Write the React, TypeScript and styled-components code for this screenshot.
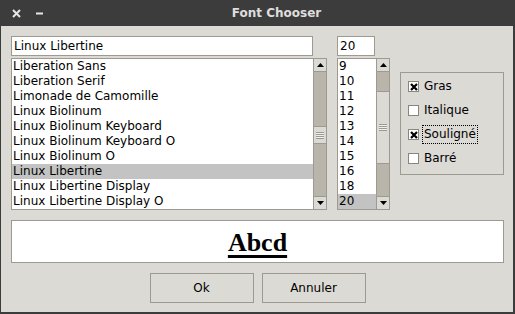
import styled, { createGlobalStyle } from "styled-components";

const GlobalStyle = createGlobalStyle`
  html, body { margin: 0; padding: 0; background: #dcdad5; }
  body { font-family: "DejaVu Sans", sans-serif; font-size: 12px; color: #000; }
`;

const fonts = [
  "Liberation Sans",
  "Liberation Serif",
  "Limonade de Camomille",
  "Linux Biolinum",
  "Linux Biolinum Keyboard",
  "Linux Biolinum Keyboard O",
  "Linux Biolinum O",
  "Linux Libertine",
  "Linux Libertine Display",
  "Linux Libertine Display O",
];

const sizes = ["9", "10", "11", "12", "13", "14", "15", "16", "18", "20"];

const styles = [
  { label: "Gras", checked: true, focus: false },
  { label: "Italique", checked: false, focus: false },
  { label: "Souligné", checked: true, focus: true },
  { label: "Barré", checked: false, focus: false },
];

const Window = styled.div`
  width: 515px;
  height: 314px;
  display: flex;
  flex-direction: column;
  box-sizing: border-box;
`;

const TitleBar = styled.div`
  height: 26px;
  background: #3c3c3c;
  display: flex;
  align-items: center;
  padding-left: 12px;
  gap: 14px;
  color: #dedede;
`;

const TitleText = styled.div`
  flex: 1;
  text-align: center;
  font-weight: bold;
  font-size: 12px;
  padding-right: 20px;
`;

const Body = styled.div`
  flex: 1;
  display: flex;
  flex-direction: column;
  padding: 10px 9px 0 10px;
  border-left: 1px solid #3c3c3c;
  border-right: 2px solid #3c3c3c;
  border-bottom: 2px solid #3c3c3c;
  box-sizing: border-box;
`;

const TopRow = styled.div`
  display: flex;
  height: 174px;
  gap: 10px;
  margin-bottom: 10px;
`;

const Column = styled.div<{ $width: number }>`
  width: ${(p) => p.$width}px;
  display: flex;
  flex-direction: column;
  gap: 2px;
`;

const Entry = styled.div<{ $width: number }>`
  width: ${(p) => p.$width}px;
  height: 20px;
  box-sizing: border-box;
  border: 1px solid #9e9a91;
  background: #fff;
  padding-left: 2px;
  line-height: 18px;
  font-size: 12px;
`;

const ListWrap = styled.div`
  display: flex;
  height: 152px;
`;

const List = styled.div`
  flex: 1;
  box-sizing: border-box;
  border: 1px solid #9e9a91;
  border-right: none;
  background: #fff;
  overflow: hidden;
`;

const Item = styled.div<{ $selected?: boolean }>`
  height: 15px;
  line-height: 15px;
  padding-left: 1px;
  white-space: nowrap;
  background: ${(p) => (p.$selected ? "#c3c3c3" : "transparent")};
`;

const ScrollBar = styled.div`
  width: 14px;
  display: flex;
  flex-direction: column;
  box-sizing: border-box;
  border: 1px solid #9e9a91;
  background: #bab5ab;
`;

const Arrow = styled.div`
  height: 13px;
  box-sizing: border-box;
  background: #dcdad5;
  border-bottom: 1px solid #9e9a91;
  display: flex;
  align-items: center;
  justify-content: center;
  &:last-child {
    border-bottom: none;
    border-top: 1px solid #9e9a91;
  }
`;

const Trough = styled.div`
  flex: 1;
  display: flex;
  flex-direction: column;
`;

const Thumb = styled.div`
  box-sizing: border-box;
  background: #dcdad5;
  border-top: 1px solid #9e9a91;
  border-bottom: 1px solid #9e9a91;
  display: flex;
  align-items: center;
  justify-content: center;
`;

const Grip = styled.div`
  width: 8px;
  height: 7px;
  background: repeating-linear-gradient(
    to bottom,
    #9e9a91 0,
    #9e9a91 1px,
    #f0efec 1px,
    #f0efec 2px
  );
`;

const CheckFrame = styled.div`
  align-self: center;
  width: 104px;
  height: 103px;
  box-sizing: border-box;
  border: 1px solid #9e9a91;
  padding: 2px 7px;
  display: flex;
  flex-direction: column;
`;

const CheckRow = styled.div`
  height: 24px;
  display: flex;
  align-items: center;
  gap: 3px;
`;

const Box = styled.div`
  width: 11px;
  height: 11px;
  box-sizing: border-box;
  border: 1px solid #8a867e;
  background: #fff;
  display: flex;
  align-items: center;
  justify-content: center;
`;

const Label = styled.span<{ $focus?: boolean }>`
  padding: 1px 1px 2px;
  border: 1px dotted ${(p) => (p.$focus ? "#000" : "transparent")};
  font-size: 12px;
`;

const Preview = styled.div`
  width: 493px;
  height: 43px;
  box-sizing: border-box;
  border: 1px solid #9e9a91;
  background: #fff;
  display: flex;
  align-items: center;
  justify-content: center;
`;

const Sample = styled.span`
  font-family: "Liberation Serif", serif;
  font-weight: bold;
  font-size: 26px;
  text-decoration: underline;
  text-decoration-thickness: 3px;
  text-underline-offset: 4px;
  margin-top: 2px;
`;

const ButtonRow = styled.div`
  width: 493px;
  display: flex;
  justify-content: center;
  gap: 8px;
  margin-top: 10px;
`;

const Button = styled.div`
  width: 104px;
  height: 30px;
  box-sizing: border-box;
  border: 1px solid #9e9a91;
  background: #dcdad5;
  display: flex;
  align-items: center;
  justify-content: center;
  font-size: 12px;
`;

const Tri = ({ down }: { down?: boolean }) => (
  <svg width="7" height="4" viewBox="0 0 7 4">
    <polygon points={down ? "0,0 7,0 3.5,4" : "0,4 7,4 3.5,0"} fill="#000" />
  </svg>
);

const Scroll = ({ top, size }: { top: number; size: number }) => (
  <ScrollBar>
    <Arrow>
      <Tri />
    </Arrow>
    <Trough>
      <Thumb style={{ marginTop: top, height: size }}>
        <Grip />
      </Thumb>
    </Trough>
    <Arrow>
      <Tri down />
    </Arrow>
  </ScrollBar>
);

const Cross = () => (
  <svg width="8" height="8" viewBox="0 0 8 8">
    <path d="M1 1 L7 7 M7 1 L1 7" stroke="#000" strokeWidth="2.2" />
  </svg>
);

export default function App() {
  return (
    <Window>
      <GlobalStyle />
      <TitleBar>
        <svg width="9" height="9" viewBox="0 0 9 9">
          <path d="M1 1 L8 8 M8 1 L1 8" stroke="#e6e6e6" strokeWidth="2" />
        </svg>
        <svg width="9" height="9" viewBox="0 0 9 9">
          <path d="M1 4.5 L8 4.5" stroke="#e6e6e6" strokeWidth="2" />
        </svg>
        <TitleText>Font Chooser</TitleText>
      </TitleBar>
      <Body>
        <TopRow>
          <Column $width={316}>
            <Entry $width={302}>Linux Libertine</Entry>
            <ListWrap>
              <List>
                {fonts.map((f) => (
                  <Item key={f} $selected={f === "Linux Libertine"}>
                    {f}
                  </Item>
                ))}
              </List>
              <Scroll top={54} size={18} />
            </ListWrap>
          </Column>
          <Column $width={53}>
            <Entry $width={38}>20</Entry>
            <ListWrap>
              <List>
                {sizes.map((s) => (
                  <Item key={s} $selected={s === "20"}>
                    {s}
                  </Item>
                ))}
              </List>
              <Scroll top={19} size={73} />
            </ListWrap>
          </Column>
          <CheckFrame>
            {styles.map((s) => (
              <CheckRow key={s.label}>
                <Box>{s.checked && <Cross />}</Box>
                <Label $focus={s.focus}>{s.label}</Label>
              </CheckRow>
            ))}
          </CheckFrame>
        </TopRow>
        <Preview>
          <Sample>Abcd</Sample>
        </Preview>
        <ButtonRow>
          <Button>Ok</Button>
          <Button>Annuler</Button>
        </ButtonRow>
      </Body>
    </Window>
  );
}
